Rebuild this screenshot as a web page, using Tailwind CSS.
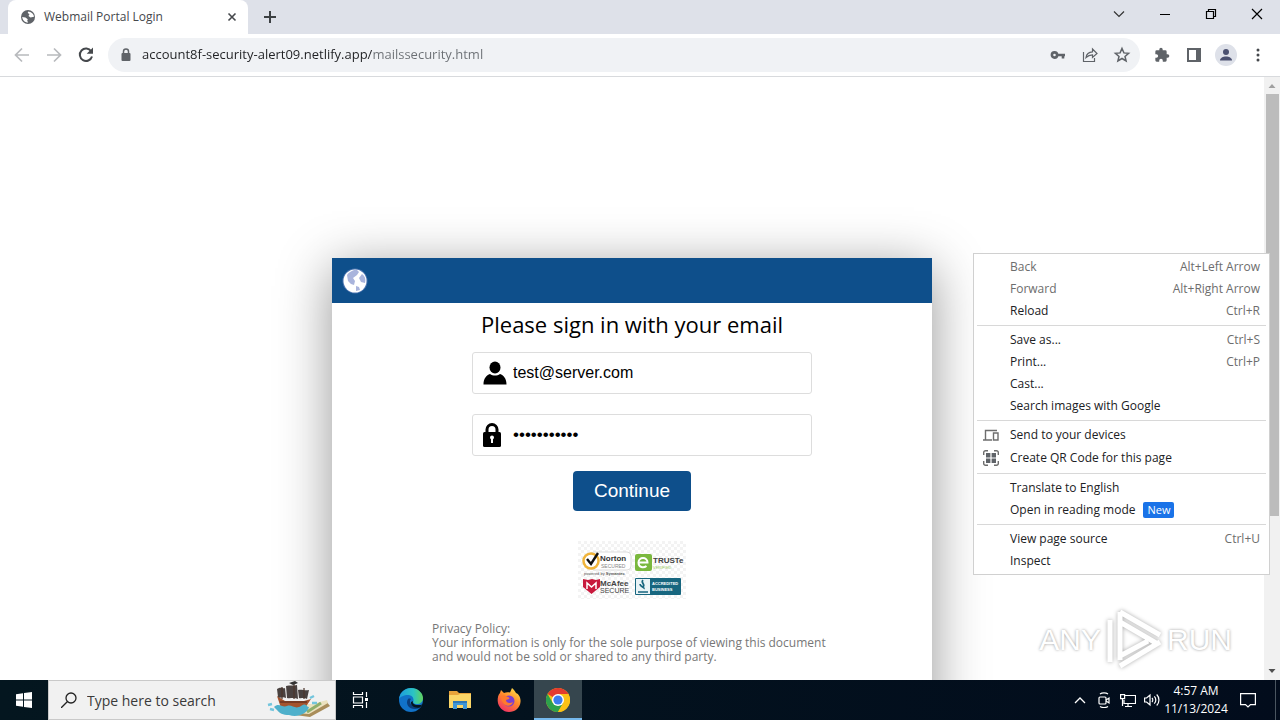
<!doctype html>
<html lang="en" class="h-full">
<head>
  <meta charset="utf-8">
  <meta name="viewport" content="width=device-width,initial-scale=1">
  <title>Webmail Portal Login</title>
  <script src="https://cdn.jsdelivr.net/npm/@tailwindcss/browser@4"></script>
</head>
<body class="h-screen overflow-hidden flex flex-col bg-white text-[12px] text-[#202124] font-['Open_Sans','Noto_Sans',sans-serif]">

  <!-- tab strip -->
  <header class="h-[34px] shrink-0 bg-[#dee1e9] flex items-start pl-2">
    <div class="w-60 h-[34px] bg-white rounded-t-lg flex items-center pl-3 pr-2 gap-2">
      <svg class="size-4 shrink-0" viewBox="0 0 16 16"><circle cx="8" cy="8" r="7" fill="#5f6368"/><path d="M8.500 2.500c-1.500 1-.5 2.200 1 2.400l-1 2 2 1.500 3.500-.6c-.1-2.500-2-4.800-5.500-5.300zM2.200 8l3.300.4 2.300 1.800-.6 1.500 1 1.800c-3 .2-5.600-2-6-5.500z" fill="#fff"/></svg>
      <span class="flex-1 text-[#45484c]">Webmail Portal Login</span>
      <button aria-label="Close tab" class="size-4 flex items-center justify-center">
        <svg class="size-4" viewBox="0 0 16 16"><path d="M4.500 4.500l7 7M11.500 4.500l-7 7" stroke="#45484c" stroke-width="1.600"/></svg>
      </button>
    </div>
    <button aria-label="New tab" class="h-[34px] w-11 flex items-center justify-center">
      <svg class="size-4" viewBox="0 0 16 16"><path d="M8 2v12M2 8h12" stroke="#3c4043" stroke-width="2"/></svg>
    </button>
    <div class="ml-auto flex h-7">
      <button aria-label="Search tabs" class="w-[46px] flex items-center justify-center">
        <svg class="size-3" viewBox="0 0 12 12"><path d="M1 3.500l5 5 5-5" fill="none" stroke="#333" stroke-width="1.200"/></svg>
      </button>
      <button aria-label="Minimize" class="w-[46px] flex items-center justify-center">
        <svg class="size-3" viewBox="0 0 12 12"><path d="M1 6.500h10" stroke="#000"/></svg>
      </button>
      <button aria-label="Restore" class="w-[46px] flex items-center justify-center">
        <svg class="size-3" viewBox="0 0 12 12"><path d="M1.500 3.500h7v7h-7zM3.500 3.500v-2h7v7h-2" fill="none" stroke="#000" stroke-width="1.200"/></svg>
      </button>
      <button aria-label="Close" class="w-[46px] flex items-center justify-center">
        <svg class="size-3" viewBox="0 0 12 12"><path d="M1 1l10 10M11 1L1 11" stroke="#000" stroke-width="1.200"/></svg>
      </button>
    </div>
  </header>

  <!-- toolbar -->
  <div class="h-[43px] shrink-0 border-b border-[#d8dadd] flex items-center px-3 gap-3 text-[#5f6368]">
    <button aria-label="Back" class="size-5 text-[#b8babd]"><svg viewBox="0 0 20 20"><path d="M17 10H4M10 3.500L3.500 10l6.500 6.500" fill="none" stroke="currentColor" stroke-width="1.700"/></svg></button>
    <button aria-label="Forward" class="size-5 text-[#b8babd]"><svg viewBox="0 0 20 20"><path d="M3 10h13M10 3.500l6.500 6.500-6.500 6.500" fill="none" stroke="currentColor" stroke-width="1.700"/></svg></button>
    <button aria-label="Reload" class="size-5 text-[#45484c]"><svg viewBox="0 0 20 20"><path d="M15.200 6.300A6.200 6.200 0 1 0 16 11.500" fill="none" stroke="currentColor" stroke-width="2"/><path d="M17 2.500v6.300h-6.300z" fill="currentColor"/></svg></button>
    <div class="flex-1 h-[34px] rounded-full bg-[#f0f2f5] flex items-center pl-3 pr-2 gap-3">
      <svg class="w-3 h-4 shrink-0" viewBox="0 0 12 16"><path d="M3.500 7V4.500a2.500 2.500 0 0 1 5 0V7" fill="none" stroke="#5f6368" stroke-width="1.500"/><rect x="1.500" y="6" width="9" height="8" rx="1" fill="#5f6368"/></svg>
      <input aria-label="Address" readonly value="account8f-security-alert09.netlify.app/mailssecurity.html" class="-ml-[10px] pl-2 flex-1 min-w-0 text-[13px] bg-transparent outline-none bg-clip-text text-transparent bg-linear-to-r from-[#202124] from-[238px] to-[#6b6f74] to-[238px]">
      <div class="flex gap-3">
        <button aria-label="Passwords" class="size-5"><svg viewBox="0 0 20 20"><circle cx="6.500" cy="10" r="2.600" fill="none" stroke="currentColor" stroke-width="2.600"/><path d="M9 10h8M15 10v3.500" stroke="currentColor" stroke-width="2.600"/></svg></button>
        <button aria-label="Share" class="size-5"><svg viewBox="0 0 20 20"><path d="M3.500 7v9.500h11V13M6 12.500c.5-3.500 2.700-5.500 6.500-5.700V4l4.500 4.500-4.500 4V9.800c-2.700 0-4.600.8-6.500 2.700z" fill="none" stroke="currentColor" stroke-width="1.200"/></svg></button>
        <button aria-label="Bookmark" class="size-5"><svg viewBox="0 0 20 20"><path d="M10 3.500l1.900 4.400 4.700.4-3.600 3.100 1.100 4.600-4.100-2.500L5.900 16 7 11.400 3.400 8.300l4.700-.4z" fill="none" stroke="currentColor" stroke-width="1.500"/></svg></button>
      </div>
    </div>
    <button aria-label="Extensions" class="size-5 flex items-center justify-center"><svg class="size-4" viewBox="0 0 24 24"><path fill="currentColor" d="M20.500 11H19V7a2 2 0 0 0-2-2h-4V3.500a2.500 2.500 0 0 0-5 0V5H4a2 2 0 0 0-2 2v3.800h1.500a2.700 2.700 0 0 1 0 5.400H2V20a2 2 0 0 0 2 2h3.800v-1.500a2.700 2.700 0 0 1 5.400 0V22H17a2 2 0 0 0 2-2v-4h1.500a2.500 2.500 0 0 0 0-5z"/></svg></button>
    <button aria-label="Side panel" class="size-5"><svg viewBox="0 0 20 20"><path d="M4 4h12v12H4z" fill="none" stroke="currentColor" stroke-width="2"/><path d="M12 4h4v12h-4z" fill="currentColor"/></svg></button>
    <button aria-label="Profile" class="size-5 flex items-center justify-center"><svg class="w-[22px] h-[22px] shrink-0" viewBox="0 0 22 22"><circle cx="11" cy="11" r="11" fill="#dee1e9"/><circle cx="11" cy="8" r="3" fill="#4a5070"/><path d="M5 16.500c0-2.500 3-4 6-4s6 1.500 6 4z" fill="#4a5070"/></svg></button>
    <button aria-label="Menu" class="size-5"><svg viewBox="0 0 20 20" fill="#45484c"><circle cx="10" cy="5" r="1.500"/><circle cx="10" cy="10" r="1.500"/><circle cx="10" cy="15" r="1.500"/></svg></button>
  </div>

  <!-- page -->
  <div class="relative flex-1 min-h-0 flex">
    <main class="flex-1 min-w-0 overflow-hidden">
      <section class="w-[600px] h-[520px] mx-auto mt-[181px] bg-white shadow-[0_10px_50px_rgba(0,0,0,0.42)]">
        <div class="h-[45px] bg-[#0e4f8b] flex items-center px-2">
          <svg class="w-[30px] h-[30px]" viewBox="0 0 30 30"><circle cx="15" cy="15" r="12.500" fill="#8b9bd8" opacity=".5"/><circle cx="15" cy="15" r="11.500" fill="#fff"/><path d="M14 4c-3 1-6 3-7 5l1 6 3 3 3 1 1-4-2-3 4-3 2-3-2-2zM22 8l-3 4 2 4 4 1c1-4 0-7-3-9zM16 20l3 1 1 3-4 1z" fill="#a9b4dc"/></svg>
        </div>
        <form class="flex flex-col items-center">
          <h1 class="mt-[6px] text-[22px] leading-[30px] text-black">Please sign in with your email</h1>
          <label class="ml-5 mt-[13px] w-[340px] h-[42px] border border-[#dddddd] rounded-[3px] flex items-center pl-[10px] gap-[6px]">
            <svg class="size-6 shrink-0" viewBox="0 0 24 24"><ellipse cx="12" cy="6.500" rx="5.500" ry="6"/><path d="M.5 23.500c0-6 3-9.500 6.500-10.500 3 2 7 2 10 0 3.500 1 6.500 4.500 6.500 10.500z"/></svg>
            <input type="email" aria-label="Email" value="test@server.com" class="flex-1 min-w-0 text-[16px] text-black outline-none font-['Liberation_Sans',sans-serif]">
          </label>
          <label class="ml-5 mt-5 w-[340px] h-[42px] border border-[#dddddd] rounded-[3px] flex items-center pl-[10px] gap-[6px]">
            <svg class="size-6 shrink-0" viewBox="0 0 24 24"><path d="M4 10V6.500a5 5 0 0 1 10 0V10" fill="none" stroke="#000" stroke-width="3"/><rect y="9" width="18" height="15" rx="1.500"/><path d="M7 14.500a2 2 0 0 1 4 0c0 .8-.4 1.300-1 1.700V20H8v-3.800c-.6-.4-1-.9-1-1.700z" fill="#fff"/></svg>
            <input type="password" aria-label="Password" value="password123" class="flex-1 min-w-0 text-[17px] text-black outline-none font-['Liberation_Sans',sans-serif]">
          </label>
          <button type="button" class="mt-[15px] w-[118px] h-10 rounded bg-[#0e4f8b] text-white text-[19px] font-['Liberation_Sans',sans-serif]">Continue</button>
        </form>
        <svg class="block mx-auto mt-[30px] w-[108px] h-[58px] font-['Liberation_Sans',sans-serif]" viewBox="0 0 108 58">
          <defs><pattern id="check" width="6" height="6" patternUnits="userSpaceOnUse"><path d="M0 0h3v3H0zM3 3h3v3H3z" fill="#f3f3f3"/></pattern></defs>
          <rect width="108" height="58" fill="#fff"/>
          <rect width="108" height="58" fill="url(#check)"/>
          <rect x="12" y="11" width="41" height="18" rx="4" fill="#fff" stroke="#ddd"/>
          <circle cx="13" cy="20" r="7.500" fill="#fff" stroke="#f0b43a" stroke-width="2.500"/>
          <path d="M9 18l4 5 7-11" fill="none" stroke="#111" stroke-width="2.400"/>
          <text x="22" y="20" font-size="8" font-weight="700" fill="#333">Norton</text>
          <text x="23" y="27" font-size="5" fill="#888">SECURED</text>
          <text x="6" y="34" font-size="4" fill="#555">powered by <tspan font-weight="700">Symantec</tspan></text>
          <rect x="57" y="13" width="17" height="17" rx="2" fill="#7ab83e"/>
          <path d="M60.500 21.500h9c0-6-9-6-9 0 0 5 5 6 8 3.500" fill="none" stroke="#fff" stroke-width="2"/>
          <text x="75" y="22" font-size="8" font-weight="700" fill="#444">TRUSTe</text>
          <text x="75" y="28" font-size="4" fill="#9ccc65">VERIFIED</text>
          <path d="M5 38l5 1 4-1 4 1 4-1v8l-8.500 7L5 46z" fill="#c8193c"/>
          <path d="M9 48v-6l4.500 4 4.500-4v6" fill="none" stroke="#fff" stroke-width="1.500"/>
          <text x="22" y="45" font-size="8" font-weight="700" fill="#444">McAfee</text>
          <text x="22" y="52" font-size="7" fill="#444">SECURE</text>
          <rect x="57" y="37" width="46" height="17" rx="1" fill="#17667f"/>
          <rect x="58" y="38" width="14" height="15" fill="#e9f3f6"/>
          <path d="M65 39c-3 3 3 4 0 7M62 43c0 3 5 3 4 5M60 51h10" fill="none" stroke="#17667f" stroke-width="1.700"/>
          <text x="74" y="44" font-size="4" font-weight="700" fill="#fff">ACCREDITED</text>
          <text x="74" y="50" font-size="4" font-weight="700" fill="#fff">BUSINESS</text>
        </svg>
        <p class="mt-[23px] ml-[100px] w-[440px] text-[12px] leading-[14px] text-[#777777]">Privacy Policy:<br>Your information is only for the sole purpose of viewing this document<br>and would not be sold or shared to any third party.</p>
      </section>
    </main>

    <!-- scrollbar -->
    <div class="w-4 shrink-0 bg-[#f1f1f1] flex flex-col items-center">
      <svg class="w-4 h-[17px]" viewBox="0 0 16 17"><path d="M4.500 11h7L8 7z" fill="#a0a0a0"/></svg>
      <div class="w-[13px] h-[70%] bg-[#bcbcbc]"></div>
      <svg class="mt-auto w-4 h-[17px]" viewBox="0 0 16 17"><path d="M4.500 6h7L8 10z" fill="#505050"/></svg>
    </div>

    <!-- watermark -->
    <div class="absolute right-12 bottom-2 h-16 flex items-center gap-1 text-[30px] leading-none text-white [text-shadow:0_0_3px_#999] font-['Liberation_Sans',sans-serif]">
      <span>ANY</span>
      <svg class="w-[58px] h-16 drop-shadow-[0_0_2px_#aaa]" viewBox="0 0 58 64"><path d="M5 12v42M15 4v48M15 4l40 23M15 14l36 21M55 34L15 58M43 33L15 48" fill="none" stroke="#fff" stroke-width="5"/></svg>
      <span>RUN</span>
    </div>

    <!-- context menu -->
    <div role="menu" class="absolute right-[10px] top-44 w-[297px] bg-white border border-[#d0d0d0] px-[3px] py-[2px]">
      <button role="menuitem" class="w-full h-[22px] pl-[33px] pr-[6px] flex items-center justify-between text-[#6d6d6d]"><span>Back</span><span>Alt+Left Arrow</span></button>
      <button role="menuitem" class="w-full h-[22px] pl-[33px] pr-[6px] flex items-center justify-between text-[#6d6d6d]"><span>Forward</span><span>Alt+Right Arrow</span></button>
      <button role="menuitem" class="w-full h-[22px] pl-[33px] pr-[6px] flex items-center justify-between"><span>Reload</span><span class="text-[#6d6d6d]">Ctrl+R</span></button>
      <hr class="my-[3px] border-[#d8d8d8]">
      <button role="menuitem" class="w-full h-[22px] pl-[33px] pr-[6px] flex items-center justify-between"><span>Save as...</span><span class="text-[#6d6d6d]">Ctrl+S</span></button>
      <button role="menuitem" class="w-full h-[22px] pl-[33px] pr-[6px] flex items-center justify-between"><span>Print...</span><span class="text-[#6d6d6d]">Ctrl+P</span></button>
      <button role="menuitem" class="w-full h-[22px] pl-[33px] flex items-center">Cast...</button>
      <button role="menuitem" class="w-full h-[22px] pl-[33px] flex items-center">Search images with Google</button>
      <hr class="my-[3px] border-[#d8d8d8]">
      <button role="menuitem" class="w-full h-[22px] pl-[6px] flex items-center gap-[11px]">
        <svg class="size-4" viewBox="0 0 16 16" fill="none" stroke="#6d6d6d" stroke-width="1.400"><path d="M0 13h9M2.500 13V3.500H14M10.500 6h4.500v7h-4.500z"/></svg>Send to your devices</button>
      <button role="menuitem" class="w-full h-6 pl-[6px] flex items-center gap-[11px]">
        <svg class="size-4" viewBox="0 0 16 16"><path d="M.7 5V2.500A1.800 1.800 0 0 1 2.500.7H5M11 .7h2.500a1.800 1.800 0 0 1 1.800 1.800V5M15.300 11v2.500a1.800 1.800 0 0 1-1.800 1.800H11M5 15.300H2.500a1.800 1.800 0 0 1-1.800-1.800V11" fill="none" stroke="#6d6d6d" stroke-width="1.400"/><path d="M3 3h4.400v4.400H3zM8.600 3H13v4.400H8.600zM3 8.600h4.400V13H3zM8.600 8.600H13V13H8.600z" fill="#5f6368"/></svg>Create QR Code for this page</button>
      <hr class="my-[3px] border-[#d8d8d8]">
      <button role="menuitem" class="w-full h-[22px] pl-[33px] flex items-center">Translate to English</button>
      <button role="menuitem" class="w-full h-[22px] pl-[33px] flex items-center gap-2">Open in reading mode<span class="h-4 px-1 rounded-[2px] bg-[#1a73e8] text-white text-[11px] leading-4">New</span></button>
      <hr class="my-[3px] border-[#d8d8d8]">
      <button role="menuitem" class="w-full h-[22px] pl-[33px] pr-[6px] flex items-center justify-between"><span>View page source</span><span class="text-[#6d6d6d]">Ctrl+U</span></button>
      <button role="menuitem" class="w-full h-[22px] pl-[33px] flex items-center">Inspect</button>
    </div>
  </div>

  <!-- taskbar -->
  <footer class="h-10 shrink-0 bg-linear-to-r from-[#04161f] to-[#020c1c] flex text-white">
    <button aria-label="Start" class="w-12 flex items-center justify-center">
      <svg class="size-4" viewBox="0 0 16 16" fill="#fff"><path d="M0 2.300L7 1.300v6.200H0zM8 1.100L16 0v7.500H8zM0 8.500h7v6.200l-7-1zM8 8.500h8V16l-8-1.100z"/></svg>
    </button>
    <div class="w-72 bg-[#f1f1f1] border border-[#c9c9c9] flex items-center pl-3 text-[#3a3a3a]">
      <svg class="size-4 shrink-0" viewBox="0 0 16 16"><circle cx="10" cy="6" r="5" fill="none" stroke="#222" stroke-width="1.300"/><path d="M6.500 9.500L0 16" stroke="#222" stroke-width="1.300"/></svg>
      <input aria-label="Search" placeholder="Type here to search" class="ml-[10px] flex-1 min-w-0 text-[14px] outline-none placeholder:text-[#3a3a3a]">
      <svg class="w-[64px] h-[38px] shrink-0 mr-1" viewBox="0 0 64 38">
        <path d="M28 34l9-8 22-6 4 5-20 11z" fill="#a98d5a"/><path d="M29 32l9-9 8 0 14-4 1 3-19 11z" fill="#ece2bf"/><path d="M40 31l14-9" stroke="#8fae6b" stroke-width="3"/>
        <path d="M10 15l4 12h24l6-9-7 2H18z" fill="#a4532d"/><path d="M13 21h27" stroke="#6a3320" stroke-width="1.500"/>
        <path d="M7 26c5-5 8 1 13-1s8 4 14 0 5 1 8 1c-2 7-12 11-20 8-6 0-10-2-12-5z" fill="#4fb0cb"/>
        <path d="M1 24l4-1M3 28l4 1M43 17l4-2M45 22l5 0" stroke="#72c5dd" stroke-width="2.500"/>
        <path d="M10 8c4-3 6 0 8-1l1 10c-4-2-6 1-8-1zM19 5c4-1 7 0 11-1l1 14c-4-2-8 0-11-1zM31 9c4-1 6 1 11 0l-2 9c-3-2-6 0-8-1z" fill="#49413f"/>
        <path d="M27 1v17M15 6v12M37 7v11" stroke="#4b352b" stroke-width="1.200"/><path d="M22 2l6-2 3 2-5 2z" fill="#333"/>
      </svg>
    </div>
    <div class="flex pl-[2px]">
      <button aria-label="Task view" class="w-12 pr-1 flex items-center justify-center">
        <svg class="size-4" viewBox="0 0 16 16" fill="none" stroke="#fff" stroke-width="1.200"><path d="M1.500 0v2.500h9V0M1.500 5h9v6h-9zM1.500 16v-2.500h9V16M14.500 0v5M14.500 10v6"/><path d="M13 6h3v3h-3z" fill="#fff" stroke="none"/></svg>
      </button>
      <button aria-label="Edge" class="w-[50px] flex items-center justify-center">
        <svg class="size-6" viewBox="0 0 24 24"><defs><linearGradient id="edge" x2="1"><stop stop-color="#1c9bde"/><stop offset=".6" stop-color="#2bc3c4"/><stop offset="1" stop-color="#62d35c"/></linearGradient></defs><circle cx="12" cy="12" r="12" fill="#1172c8"/><path d="M0 11C1 4 6 0 12 0c7 0 12 5 12 10 0 4-3 6-6 6-4 0-4-2-3.500-3C15 9 12 7 9 7c-4 0-8 2-9 4z" fill="url(#edge)"/><path d="M9 11c-3 5 1 10 7 10 3 0 5-1 6.500-3C19 20 12 19 11 14c-.3-2 1-3 1-3s-1.500-1-3 0z" fill="#0b3e7b"/><path d="M14 13c-1 2 1 4 5 4 2 0 4 0 4.500-1-1 2-1.500 3-3 3.500-5 1-9-2-8.500-5.500z" fill="#04161f"/></svg>
      </button>
      <button aria-label="File Explorer" class="w-12 flex items-center justify-center">
        <svg class="w-[22px] h-[20px]" viewBox="0 0 22 20"><path d="M0 1h8l2 2h12v5H0z" fill="#e8a33a"/><path d="M0 5h9l2-1h11v14H0z" fill="#fbd667"/><path d="M4 11h14v8h-4v-4H8v4H4z" fill="#3f96d6"/><path d="M4 11h14v2H4z" fill="#2f78b5"/></svg>
      </button>
      <button aria-label="Firefox" class="w-[50px] flex items-center justify-center">
        <svg class="size-6" viewBox="0 0 24 24"><defs><linearGradient id="fox" x1=".8" x2=".2" y2="1"><stop stop-color="#ffe14a"/><stop offset=".45" stop-color="#ff8a2b"/><stop offset="1" stop-color="#f02a6a"/></linearGradient></defs><path d="M3 5l1-3 3 3c2-1 4-1 6-.5L15 0c2 2 3 3 4 5 3 1 5 5 4.500 9C23 20 18 24 12 24S1 19 .7 13C.6 10 1 7 3 5z" fill="url(#fox)"/><circle cx="12" cy="13" r="5.500" fill="#7b3fd0"/><path d="M4 8c3-1 5 0 7 1 1 .5 2 1 1 2l-3 1c0 3 4 4 7 2-1 4-6 5-9 2-2-2-3-5-3-8z" fill="#ff7a2d"/></svg>
      </button>
      <button aria-label="Chrome" class="w-12 flex items-center justify-center bg-[#36464e] border-b-2 border-[#76b9ed]">
        <svg class="mt-[2px] size-6" viewBox="0 0 24 24"><circle cx="12" cy="12" r="12" fill="#fbc116"/><path d="M12 12L1.600 6A12 12 0 0 1 22.400 6z" fill="#e33b2e"/><path d="M12 6h10.400L12 12z" fill="#e33b2e"/><path d="M1.600 6A12 12 0 0 0 12 24l5.200-9L12 12 6.800 15z" fill="#2da14c"/><path d="M12 24a12 12 0 0 0 10.400-18H12l5.200 9z" fill="#fbc116"/><circle cx="12" cy="12" r="6" fill="#fff"/><circle cx="12" cy="12" r="4.600" fill="#3b7ded"/></svg>
      </button>
    </div>
    <div class="ml-auto flex items-center">
      <div class="flex items-center gap-2">
        <svg class="w-4 h-4" viewBox="0 0 16 16"><path d="M3 11l5-5 5 5" fill="none" stroke="#fff" stroke-width="1.300"/></svg>
        <svg class="w-4 h-4" viewBox="0 0 16 16" fill="none" stroke="#fff" stroke-width="1.200"><rect x="3" y="5" width="7" height="7" rx="1"/><path d="M10 8l3-2v5l-3-2M4 2c2-1.500 6-1.500 8 0M4 14.500c2 1.500 6 1.500 8 0"/></svg>
        <svg class="w-4 h-4" viewBox="0 0 16 16" fill="none" stroke="#fff" stroke-width="1.200"><path d="M5 3.500h10.500v8H4V8M8 11.500V14M5 14.500h7M.6 2.600h4v4h-4zM2.500 7v7"/></svg>
        <svg class="w-4 h-4" viewBox="0 0 16 16" fill="none" stroke="#fff" stroke-width="1.200"><path d="M.6 6h2L6 3v10L2.600 10h-2zM8 6c1 1 1 3 0 4M10.300 4.300c2 2 2 5.400 0 7.400M12.700 2.500c3 3 3 8 0 11"/></svg>
      </div>
      <div class="ml-1 w-[64px] text-center leading-[18px] whitespace-nowrap">4:57 AM<br>11/13/2024</div>
      <button aria-label="Notifications" class="w-12 h-10 pr-2 flex items-center justify-center border-r border-[#4a5560]">
        <svg class="size-4" viewBox="0 0 16 16"><path d="M.6 1.600h14.800v11H10.500L8 15l-2.500-2.400H.6z" fill="none" stroke="#fff" stroke-width="1.200"/></svg>
      </button>
      <div class="w-1"></div>
    </div>
  </footer>
</body>
</html>
